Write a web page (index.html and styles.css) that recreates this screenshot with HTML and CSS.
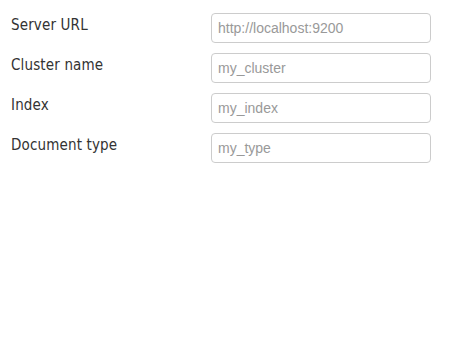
FILE: index.html
```html
<!DOCTYPE html>
<html lang="en">
<head>
  <meta charset="UTF-8" />
  <title>Connection settings</title>
  <link rel="stylesheet" href="styles.css">
</head>
<body>
  <form class="settings">
    <div class="row">
      <label for="url">Server URL</label>
      <input id="url" type="text" placeholder="http://localhost:9200">
    </div>
    <div class="row">
      <label for="cluster">Cluster name</label>
      <input id="cluster" type="text" placeholder="my_cluster">
    </div>
    <div class="row">
      <label for="index">Index</label>
      <input id="index" type="text" placeholder="my_index">
    </div>
    <div class="row">
      <label for="doctype">Document type</label>
      <input id="doctype" type="text" placeholder="my_type">
    </div>
  </form>
</body>
</html>
```

FILE: styles.css
```css
body {
  margin: 0;
  background: #fff;
}

.settings {
  display: flex;
  flex-direction: column;
  gap: 10px;
  padding: 13px 11px;
}

.row {
  display: flex;
  align-items: flex-start;
}

.row label {
  width: 200px;
  padding-top: 3px;
  font-family: "DejaVu Sans Condensed", "DejaVu Sans", sans-serif;
  font-stretch: condensed;
  font-size: 15px;
  letter-spacing: 0.15px;
  color: #333;
}

.row input {
  box-sizing: border-box;
  width: 220px;
  height: 30px;
  margin: 0;
  padding: 0 6px;
  border: 1px solid #ccc;
  border-radius: 4px;
  font-family: "Liberation Sans", Arial, sans-serif;
  font-size: 14px;
  color: #555;
}

.row input::placeholder {
  color: #999;
}
```
